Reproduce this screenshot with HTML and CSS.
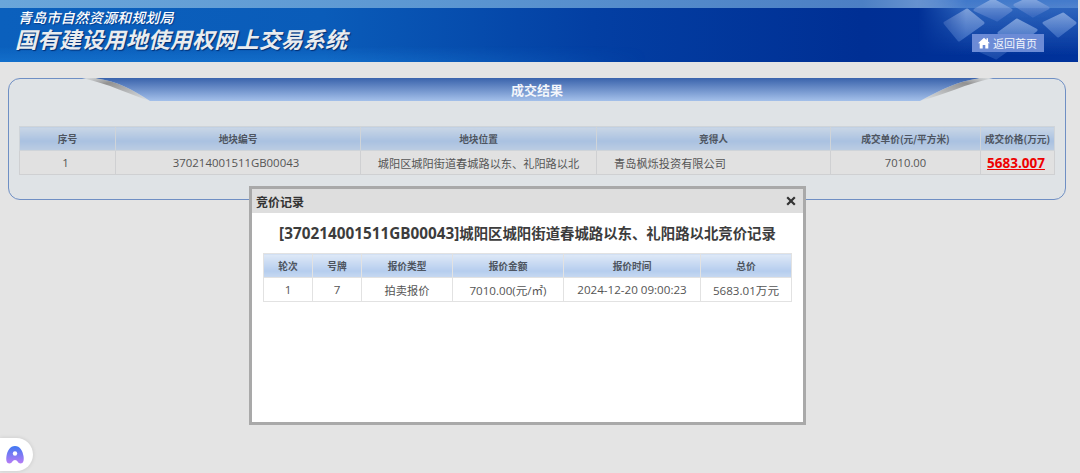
FILE: index.html
```html
<!DOCTYPE html>
<html lang="zh-CN">
<head>
<meta charset="utf-8">
<title>成交结果</title>
<link rel="stylesheet" href="styles.css">
</head>
<body>
<header class="site-header">
  <div class="header-band"></div>
  <svg class="crystal" viewBox="0 0 160 62" width="160" height="62" aria-hidden="true">
    <defs>
      <linearGradient id="key" x1="0" y1="0" x2="0" y2="1">
        <stop offset="0" stop-color="#86a9e0"/>
        <stop offset="1" stop-color="#3f6fc4"/>
      </linearGradient>
      <linearGradient id="fade" x1="0" y1="0" x2="1" y2="0">
        <stop offset="0" stop-color="#fff" stop-opacity="0"/>
        <stop offset="0.3" stop-color="#fff" stop-opacity=".9"/>
      </linearGradient>
      <linearGradient id="glow" x1="0" y1="0" x2="0" y2="1">
        <stop offset="0" stop-color="#3a74c8"/>
        <stop offset="1" stop-color="#3a74c8" stop-opacity="0"/>
      </linearGradient>
      <filter id="soft"><feGaussianBlur stdDeviation=".7"/></filter>
      <mask id="fm"><rect width="160" height="62" fill="url(#fade)"/></mask>
    </defs>
    <g mask="url(#fm)" filter="url(#soft)">
      <rect width="160" height="56" fill="url(#glow)"/>
      <g fill="url(#key)" stroke="url(#key)" stroke-width="3" stroke-linejoin="round">
        <path d="M27 23 49 10 65 23 41 40Z"/>
        <path d="M57 10 75 0 93 10 79 20Z"/>
        <path d="M81 33 99 20 118 30 99 45Z"/>
        <path d="M97 5 112-2 130 8 115 16Z"/>
        <path d="M126 23 145 14 157 23 140 36Z"/>
        <path d="M60 50 75 38 92 48 78 58Z" opacity=".45"/>
      </g>
    </g>
  </svg>
  <div class="brand">
    <p class="brand-org">青岛市自然资源和规划局</p>
    <h1 class="brand-title">国有建设用地使用权网上交易系统</h1>
  </div>
  <a class="home-link" href="#">
    <svg class="home-icon" viewBox="0 0 12 12" width="12" height="12" aria-hidden="true">
      <path d="M6 .8 0 6.200h1.700V11.500h3V8h2.600v3.500h3V6.200H12L10 4.400V1.200H8.500v1.800Z" fill="#fff"/>
    </svg>
    <span>返回首页</span>
  </a>
</header>

<main class="panel">
  <div class="banner">
    <svg class="banner-shape" viewBox="0 0 911 23" width="911" height="23" preserveAspectRatio="none" aria-hidden="true">
      <defs>
        <linearGradient id="ban" x1="0" y1="0" x2="0" y2="1">
          <stop offset="0" stop-color="#3a63ac"/>
          <stop offset="1" stop-color="#a4c0ea"/>
        </linearGradient>
        <linearGradient id="swl" x1="0" y1="0" x2="1" y2="1">
          <stop offset="0" stop-color="#dfe3e6"/>
          <stop offset=".3" stop-color="#929292"/>
          <stop offset="1" stop-color="#dfe3e6"/>
        </linearGradient>
        <linearGradient id="swr" x1="1" y1="0" x2="0" y2="1">
          <stop offset="0" stop-color="#dfe3e6"/>
          <stop offset=".3" stop-color="#929292"/>
          <stop offset="1" stop-color="#dfe3e6"/>
        </linearGradient>
      </defs>
      <path d="M0 0C28 6 46 16 68 23C50 11 36 4 14 0Z" fill="url(#swl)"/>
      <path d="M911 0C883 6 865 16 838 23C860 11 875 4 897 0Z" fill="url(#swr)"/>
      <path d="M14 0H897C875 4 860 11 838 23H68C50 11 36 4 14 0Z" fill="url(#ban)"/>
    </svg>
    <h2 class="banner-title">成交结果</h2>
  </div>
  <table class="result-table">
    <thead>
      <tr>
        <th class="rc-1">序号</th>
        <th class="rc-2">地块编号</th>
        <th class="rc-3">地块位置</th>
        <th class="rc-4">竞得人</th>
        <th class="rc-5">成交单价(元/平方米)</th>
        <th class="rc-6">成交价格(万元)</th>
      </tr>
    </thead>
    <tbody>
      <tr>
        <td class="nudge">1</td>
        <td class="nudge">370214001511GB00043</td>
        <td>城阳区城阳街道春城路以东、礼阳路以北</td>
        <td class="winner">青岛枫烁投资有限公司</td>
        <td>7010.00</td>
        <td class="price-cell"><a class="price" href="#">5683.007</a></td>
      </tr>
    </tbody>
  </table>
</main>

<section class="modal">
  <div class="modal-bar">
    <span class="modal-name">竞价记录</span>
    <svg class="modal-close" viewBox="0 0 10 10" width="10" height="10" aria-hidden="true">
      <path d="M1.200 1.200 8.800 8.800M8.800 1.200 1.200 8.800" stroke="#333" stroke-width="2.200" fill="none"/>
    </svg>
  </div>
  <div class="modal-body">
    <h3 class="modal-heading"><span class="heading-code">[370214001511GB00043]</span>城阳区城阳街道春城路以东、礼阳路以北竞价记录</h3>
    <table class="bid-table">
      <thead>
        <tr>
          <th class="bc-1">轮次</th>
          <th class="bc-2">号牌</th>
          <th class="bc-3">报价类型</th>
          <th class="bc-4">报价金额</th>
          <th class="bc-5">报价时间</th>
          <th class="bc-6">总价</th>
        </tr>
      </thead>
      <tbody>
        <tr>
          <td class="num">1</td>
          <td class="num">7</td>
          <td>拍卖报价</td>
          <td class="num">7010.00(元/㎡)</td>
          <td class="num">2024-12-20 09:00:23</td>
          <td class="num">5683.01万元</td>
        </tr>
      </tbody>
    </table>
  </div>
</section>

<div class="float-widget">
  <svg viewBox="0 0 20 20" width="20" height="20" aria-hidden="true">
    <defs>
      <linearGradient id="ai" x1="0" y1="0" x2="0" y2="1">
        <stop offset="0" stop-color="#3f78f2"/>
        <stop offset="1" stop-color="#b77cf5"/>
      </linearGradient>
    </defs>
    <path d="M10 1C5 1 2.500 5.500 1.500 11C.8 15 1.500 18.500 4.500 18.500C7 18.500 7.500 15 10 15C12.500 15 13 18.500 15.500 18.500C18.500 18.500 19.200 15 18.500 11C17.500 5.500 15 1 10 1Z" fill="url(#ai)"/>
    <circle cx="10" cy="8.500" r="2.200" fill="#fff"/>
  </svg>
</div>
</body>
</html>
```
FILE: styles.css
```css
* { box-sizing: border-box; }

html, body {
  margin: 0;
  padding: 0;
  height: 473px;
  overflow: hidden;
}

body {
  position: relative;
  background: #e4e4e4;
  font-family: "Open Sans", "Noto Sans CJK SC", sans-serif;
  font-size: 11.200px;
  color: #555;
}

h1, h2, h3, p { margin: 0; }

a { text-decoration: none; }

/* header */
.site-header {
  position: relative;
  width: 1078px;
  height: 62px;
  overflow: hidden;
  background: linear-gradient(90deg, #0b60bd 0%, #0a5cb9 30%, #033fa3 55%, #002f94 80%, #00329b 100%);
}

.header-band {
  position: absolute;
  top: 0;
  left: 0;
  right: 0;
  height: 8px;
  background: linear-gradient(90deg, #6aa6da 0%, #5c97d2 40%, #4c7fc4 80%, #7fa4da 90%, #9db9e4 100%);
}

.site-header::after {
  content: "";
  position: absolute;
  left: 0;
  right: 0;
  bottom: 0;
  height: 16px;
  background: linear-gradient(180deg, rgba(30, 130, 220, 0), rgba(30, 130, 220, .45));
  -webkit-mask-image: linear-gradient(90deg, #000 30%, transparent 60%);
}

.crystal {
  position: absolute;
  top: 0;
  right: 0;
}

.brand {
  position: relative;
  z-index: 1;
  padding: 10px 0 0 15px;
  font-family: "Noto Sans CJK SC", sans-serif;
  font-style: italic;
  color: #fff;
}

.brand-org {
  padding-left: 3px;
  font-size: 14px;
  line-height: 15px;
  font-weight: 500;
  letter-spacing: .15px;
  text-shadow: 1px 1px 1px rgba(0, 40, 110, .6);
}

.brand-title {
  margin-top: 1px;
  font-size: 22px;
  line-height: 25px;
  font-weight: 700;
  letter-spacing: .15px;
  color: #e9ecef;
  text-shadow: 1px 1px 1px rgba(0, 30, 90, .8);
}

.home-link {
  position: absolute;
  z-index: 1;
  left: 972px;
  top: 34px;
  display: flex;
  align-items: center;
  gap: 3px;
  width: 72px;
  height: 18px;
  padding-left: 6px;
  background: #6c8bd6;
  color: #f2f5fc;
  font-size: 11px;
  font-family: "Noto Sans CJK SC", sans-serif;
}

.home-icon { flex: none; }

/* result panel */
.panel {
  width: 1058px;
  height: 122px;
  margin: 16px 0 0 8px;
  padding: 0 10px;
  background: #dfe3e6;
  border: 1px solid #6f8fc4;
  border-radius: 12px;
}

.banner {
  position: relative;
  width: 911px;
  height: 23px;
  margin: -1px auto 25px;
  display: flex;
  align-items: center;
  justify-content: center;
}

.banner-shape {
  position: absolute;
  inset: 0;
  display: block;
}

.banner-title {
  position: relative;
  font-size: 13px;
  line-height: 23px;
  font-weight: 700;
  color: #f3f6fb;
  font-family: "Noto Sans CJK SC", sans-serif;
}

/* tables */
.result-table,
.bid-table {
  table-layout: fixed;
  border-collapse: collapse;
  text-align: center;
}

.result-table { width: 1035px; }
.bid-table { width: 528px; }

th, td {
  padding: 0;
  font-weight: 400;
}

.result-table th,
.bid-table th {
  height: 24px;
  font-size: 9.700px;
  font-weight: 700;
  color: #4e5560;
  font-family: "Noto Sans CJK SC", sans-serif;
}

.result-table th {
  background: linear-gradient(180deg, #c9d6e6 0%, #a9c1e1 60%, #bccde2 100%);
  border: 1px solid #cfd4d9;
}

.result-table td {
  height: 24px;
  background: #e1e1e1;
  border: 1px solid #cfd0d2;
  color: #555;
}

.nudge {
  padding-right: 4px;
  font-size: 11.400px;
}

.winner {
  text-align: left;
  padding-left: 17px;
}

.price-cell { padding-right: 3px; }

.price {
  color: #ee0000;
  font-size: 13.500px;
  font-weight: 700;
  text-decoration: underline;
}

.rc-1 { width: 96px; }
.rc-2 { width: 245px; }
.rc-3 { width: 236px; }
.rc-4 { width: 234px; }
.rc-5 { width: 150px; }
.rc-6 { width: 74px; }

/* modal */
.modal {
  position: absolute;
  left: 249px;
  top: 186px;
  width: 557px;
  height: 239px;
  display: flex;
  flex-direction: column;
  border: 3px solid #a9a9a9;
  background: #fff;
}

.modal-bar {
  flex: none;
  height: 24px;
  display: flex;
  align-items: center;
  justify-content: space-between;
  padding: 0 7px 0 4px;
  background: #dedede;
}

.modal-name {
  font-size: 12px;
  font-weight: 700;
  color: #333;
  font-family: "Noto Sans CJK SC", sans-serif;
}

.modal-body {
  flex: 1;
  padding: 8px 11px 0;
}

.modal-heading {
  height: 24px;
  margin-bottom: 8px;
  font-size: 14.400px;
  line-height: 24px;
  font-weight: 700;
  color: #3c3c3c;
  text-align: center;
  white-space: nowrap;
}

.heading-code { font-size: 15.300px; }

.bid-table th {
  background: linear-gradient(180deg, #dfe9f7 0%, #b5cdee 72%, #c7d9f1 100%);
  border: 1px solid #e2e2e2;
}

.bid-table td {
  height: 24px;
  background: #fff;
  border: 1px solid #e2e2e2;
  color: #555;
}

.bid-table .num { font-size: 11.600px; }

.bc-1 { width: 49px; }
.bc-2 { width: 49px; }
.bc-3 { width: 91px; }
.bc-4 { width: 111px; }
.bc-5 { width: 137px; }
.bc-6 { width: 91px; }

/* floating helper */
.float-widget {
  position: absolute;
  left: 0;
  bottom: 2px;
  width: 33px;
  height: 33px;
  display: flex;
  align-items: center;
  justify-content: flex-end;
  padding-right: 8px;
  background: #fff;
  border-radius: 0 17px 17px 0;
  box-shadow: 0 0 4px rgba(0, 0, 0, .12);
}
```
